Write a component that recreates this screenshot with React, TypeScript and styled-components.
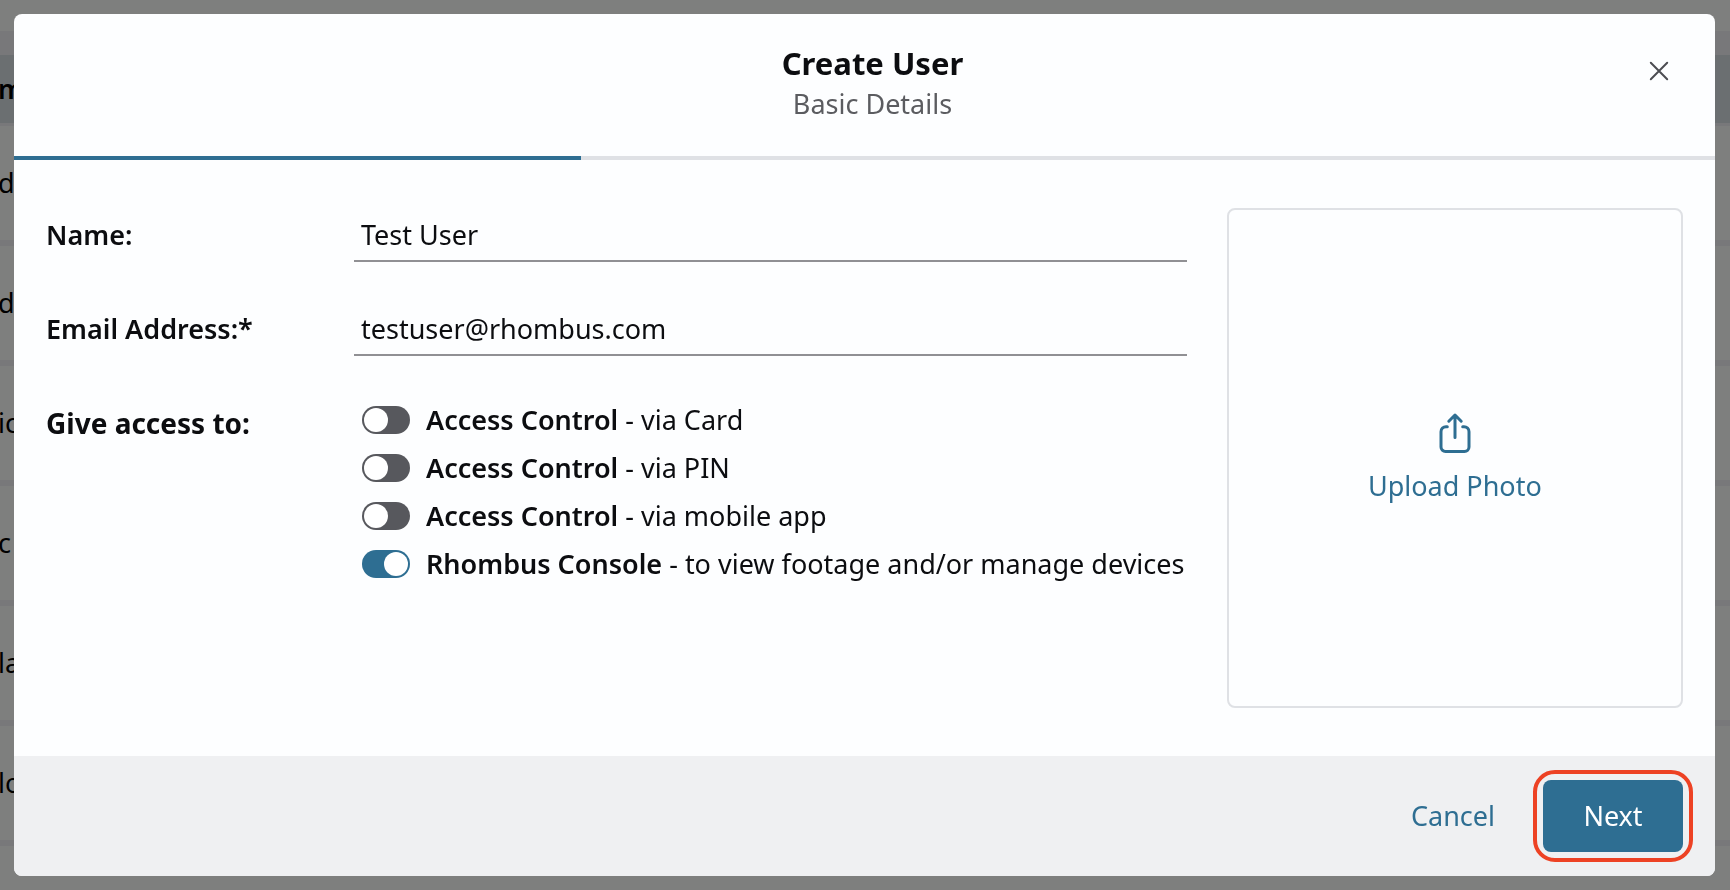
import React, { useState } from 'react';
import styled, { createGlobalStyle } from 'styled-components';

const color = {
  ink: '#0c0d10',
  muted: '#5b5c60',
  accent: '#2e6e92',
  highlight: '#ed4224',
  surface: '#fdfeff',
  footer: '#eff0f2',
  line: '#dfe1e5',
  fieldLine: '#909094',
  toggleOff: '#57585d',
};

const GlobalStyle = createGlobalStyle`
  *, *::before, *::after {
    box-sizing: border-box;
  }

  body {
    margin: 0;
    font-family: 'Noto Sans', 'Open Sans', sans-serif;
    font-size: 27px;
    line-height: 40px;
    color: ${color.ink};
  }

  button, input {
    font: inherit;
    color: inherit;
  }
`;

const Page = styled.main`
  height: 100vh;
  overflow: hidden;
  background: #fdfffd;
`;

const PageToolbar = styled.div`
  height: 31px;
`;

const PageDivider = styled.div`
  height: 24px;
  background: #f0f1f5;
`;

const UserTable = styled.table`
  width: calc(100% + 2px);
  margin-left: -2px;
  border-collapse: separate;
  border-spacing: 0;
  color: #000;
`;

const HeadCell = styled.th`
  height: 71px;
  padding: 0;
  border-bottom: 3px solid #f0f1f5;
  background: #d7dee3;
  text-align: left;
  font-weight: 600;
`;

const BodyCell = styled.td`
  height: 120px;
  padding: 0;
  border-bottom: 6px solid #f0f1f5;
`;

const Overlay = styled.div`
  position: fixed;
  inset: 0;
  padding: 14px 15px 14px 14px;
  overflow: auto;
  background: rgba(0, 0, 0, 0.5);
`;

const Dialog = styled.section`
  display: flex;
  flex-direction: column;
  overflow: hidden;
  border-radius: 8px;
  background: ${color.surface};
`;

const DialogHeader = styled.header`
  display: grid;
  grid-template-columns: 1fr auto 1fr;
  align-items: start;
  padding: 29px 32px 31px 48px;
`;

const Heading = styled.div`
  grid-column: 2;
  text-align: center;
`;

const Title = styled.h1`
  margin: 0;
  font-size: 31px;
  font-weight: 700;
`;

const Subtitle = styled.p`
  margin: 0;
  line-height: 42px;
  color: ${color.muted};
`;

const CloseButton = styled.button`
  display: grid;
  place-items: center;
  justify-self: end;
  width: 48px;
  height: 48px;
  margin-top: 4px;
  padding: 0;
  border: 0;
  background: none;
  color: #4c4d52;
  cursor: pointer;
`;

const ProgressTrack = styled.div`
  height: 4px;
  background: ${color.line};
`;

const ProgressFill = styled.div`
  height: 100%;
  background: ${color.accent};
`;

const DialogBody = styled.div`
  display: grid;
  grid-template-columns: 5fr 2fr;
  gap: 40px;
  padding: 48px 32px;
`;

const Form = styled.form`
  display: flex;
  flex-direction: column;
  gap: 40px;
`;

const FieldRow = styled.div`
  display: grid;
  grid-template-columns: 27% 1fr;
`;

const FieldLabel = styled.label`
  align-self: center;
  font-weight: 600;
`;

const TextInput = styled.input`
  width: 100%;
  height: 54px;
  padding: 0 7px;
  border: 0;
  border-bottom: 2px solid ${color.fieldLine};
  border-radius: 0;
  background: transparent;
  outline: none;
`;

const AccessGroup = styled(FieldRow)``;

const AccessLabel = styled.span`
  font-size: 28px;
  font-weight: 700;
  line-height: 54px;
`;

const OptionList = styled.div`
  display: flex;
  flex-direction: column;
  padding-left: 8px;
`;

const Option = styled.label`
  display: flex;
  align-items: center;
  gap: 16px;
  min-height: 48px;
  cursor: pointer;
`;

const OptionName = styled.strong`
  font-weight: 600;
`;

const Toggle = styled.input`
  appearance: none;
  display: flex;
  flex: none;
  width: 48px;
  height: 28px;
  margin: 0;
  padding: 2px;
  border-radius: 14px;
  background: ${color.toggleOff};
  cursor: pointer;

  &::before {
    content: '';
    width: 24px;
    height: 24px;
    border-radius: 50%;
    background: #fff;
  }

  &:checked {
    justify-content: flex-end;
    background: ${color.accent};
  }
`;

const UploadButton = styled.button`
  display: flex;
  flex-direction: column;
  align-items: center;
  justify-content: center;
  gap: 12px;
  min-height: 500px;
  padding: 0;
  border: 2px solid ${color.line};
  border-radius: 8px;
  background: transparent;
  color: ${color.accent};
  cursor: pointer;
`;

const DialogFooter = styled.footer`
  display: flex;
  align-items: center;
  justify-content: flex-end;
  gap: 24px;
  padding: 24px 32px;
  background: ${color.footer};
`;

const FooterButton = styled.button<{ $primary?: boolean }>`
  position: relative;
  min-width: ${({ $primary }) => ($primary ? '140px' : '0')};
  height: 72px;
  padding: 0 24px;
  border: 0;
  border-radius: 8px;
  background: ${({ $primary }) => ($primary ? color.accent : 'transparent')};
  color: ${({ $primary }) => ($primary ? '#fff' : color.accent)};
  cursor: pointer;
`;

const HighlightRing = styled.span`
  position: absolute;
  inset: -10px;
  border: 4px solid ${color.highlight};
  border-radius: 22px;
  pointer-events: none;
`;

const CloseIcon = () => (
  <svg width="20" height="20" viewBox="0 0 20 20" fill="none" stroke="currentColor" strokeWidth="2" strokeLinecap="round" aria-hidden="true">
    <path d="M1.8 1.8 18.2 18.2M18.2 1.8 1.8 18.2" />
  </svg>
);

const UploadIcon = () => (
  <svg width="40" height="44" viewBox="0 0 40 44" fill="none" stroke="currentColor" strokeWidth="3" strokeLinecap="round" strokeLinejoin="round" aria-hidden="true">
    <path d="M12.3 16.7H11a5 5 0 0 0-5 5V37a4.5 4.5 0 0 0 4.5 4.5h19A4.5 4.5 0 0 0 34 37V21.7a5 5 0 0 0-5-5h-1.3" />
    <path d="M20 27.5V5M13.8 11.2 20 5l6.2 6.2" />
  </svg>
);

const tableRows = ['d', 'd', 'ic', 'c', 'la', 'lo'];

const accessOptions = [
  { id: 'card', name: 'Access Control', detail: 'via Card', on: false },
  { id: 'pin', name: 'Access Control', detail: 'via PIN', on: false },
  { id: 'mobile', name: 'Access Control', detail: 'via mobile app', on: false },
  { id: 'console', name: 'Rhombus Console', detail: 'to view footage and/or manage devices', on: true },
];

const STEP = 1;
const STEP_COUNT = 3;

export default function App() {
  const [name, setName] = useState('Test User');
  const [email, setEmail] = useState('testuser@rhombus.com');

  return (
    <>
      <GlobalStyle />
      <Page>
        <PageToolbar />
        <PageDivider />
        <UserTable>
          <thead>
            <tr>
              <HeadCell>m</HeadCell>
            </tr>
          </thead>
          <tbody>
            {tableRows.map((text, index) => (
              <tr key={index}>
                <BodyCell>{text}</BodyCell>
              </tr>
            ))}
          </tbody>
        </UserTable>
      </Page>
      <Overlay>
        <Dialog role="dialog" aria-modal="true" aria-labelledby="dialog-title">
          <DialogHeader>
            <Heading>
              <Title id="dialog-title">Create User</Title>
              <Subtitle>Basic Details</Subtitle>
            </Heading>
            <CloseButton type="button" aria-label="Close">
              <CloseIcon />
            </CloseButton>
          </DialogHeader>
          <ProgressTrack role="progressbar" aria-label="Step" aria-valuemin={0} aria-valuemax={STEP_COUNT} aria-valuenow={STEP}>
            <ProgressFill style={{ width: `${(STEP / STEP_COUNT) * 100}%` }} />
          </ProgressTrack>
          <DialogBody>
            <Form>
              <FieldRow>
                <FieldLabel htmlFor="name">Name:</FieldLabel>
                <TextInput id="name" type="text" value={name} onChange={(e) => setName(e.target.value)} />
              </FieldRow>
              <FieldRow>
                <FieldLabel htmlFor="email">Email Address:*</FieldLabel>
                <TextInput id="email" type="email" value={email} onChange={(e) => setEmail(e.target.value)} />
              </FieldRow>
              <AccessGroup role="group" aria-labelledby="access-label">
                <AccessLabel id="access-label">Give access to:</AccessLabel>
                <OptionList>
                  {accessOptions.map((option) => (
                    <Option key={option.id} htmlFor={option.id}>
                      <Toggle id={option.id} type="checkbox" role="switch" defaultChecked={option.on} />
                      <span>
                        <OptionName>{option.name}</OptionName> - {option.detail}
                      </span>
                    </Option>
                  ))}
                </OptionList>
              </AccessGroup>
            </Form>
            <UploadButton type="button">
              <UploadIcon />
              <span>Upload Photo</span>
            </UploadButton>
          </DialogBody>
          <DialogFooter>
            <FooterButton type="button">Cancel</FooterButton>
            <FooterButton type="button" $primary>
              Next
              <HighlightRing />
            </FooterButton>
          </DialogFooter>
        </Dialog>
      </Overlay>
    </>
  );
}
